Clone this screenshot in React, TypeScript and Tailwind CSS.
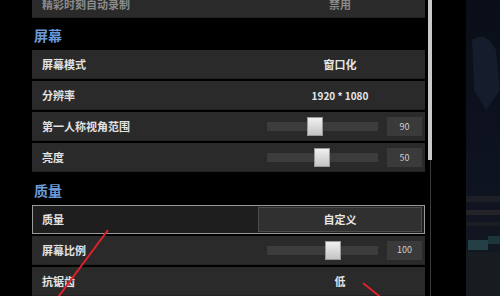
import React from "react";

const font = { fontFamily: '"Noto Sans CJK SC", "Noto Sans", sans-serif' };

const Row = ({ label, children, dim, h = "h-[29px]" }: { label: string; children?: React.ReactNode; dim?: boolean; h?: string }) => (
    <div className={`flex ${h} items-center bg-[#2a2a2a] border-b border-[#222]`}>
        <div className={`w-[226px] pl-[10px] text-[11px] font-bold ${dim ? "text-[#8a8a8a]" : "text-[#e2e2e2]"}`}>{label}</div>
        <div className="flex flex-1 items-center justify-center pr-[3px]">{children}</div>
    </div>
);

const Value = ({ text, dim, small }: { text: string; dim?: boolean; small?: boolean }) => (
    <span className={`${small ? "text-[10px]" : "text-[11px]"} font-bold ${dim ? "text-[#8a8a8a]" : "text-[#e6e6e6]"}`}>{text}</span>
);

const Slider = ({ pos, value }: { pos: number; value: string }) => (
    <div className="flex w-full items-center">
        <div className="relative ml-[9px] h-[9px] w-[111px] bg-[#3c3c3c]">
            <div
                className="absolute top-[-5px] h-[19px] w-[16px] bg-gradient-to-b from-[#f0f0f0] to-[#c4c4c4] border border-[#999]"
                style={{ left: pos }}
            />
        </div>
        <div className="ml-[9px] flex h-[19px] w-[35px] items-center justify-center bg-[#3a3a3a] text-[9px] text-[#cfcfcf]">
            {value}
        </div>
    </div>
);

const Header = ({ text }: { text: string }) => (
    <div className="flex h-[34px] items-center pl-[2px] pt-[3px] text-[14px] font-bold text-[#6c9ad6]">{text}</div>
);

export default function App() {
    return (
        <div className="relative flex h-[296px] w-[500px] overflow-hidden bg-black" style={font}>
            <div className="w-[32px]" />
            <div className="-mt-[8px] flex w-[393px] flex-col">
                <Row label="精彩时刻自动录制" dim h="h-[27px]">
                    <Value text="禁用" dim />
                </Row>
                <Header text="屏幕" />
                <div className="flex flex-col gap-[2px]">
                    <Row label="屏幕模式">
                        <Value text="窗口化" />
                    </Row>
                    <Row label="分辨率">
                        <Value text="1920 * 1080" small />
                    </Row>
                    <Row label="第一人称视角范围">
                        <Slider pos={40} value="90" />
                    </Row>
                    <Row label="亮度">
                        <Slider pos={47} value="50" />
                    </Row>
                </div>
                <Header text="质量" />
                <div className="flex flex-col gap-[2px]">
                    <div className="flex h-[29px] items-center border border-[#9a9a9a] bg-[#1e1e1e]">
                        <div className="w-[225px] pl-[9px] text-[11px] font-bold text-[#e2e2e2]">质量</div>
                        <div className="mr-[2px] flex h-[25px] flex-1 items-center justify-center border border-[#4a4a4a] bg-[#303030]">
                            <Value text="自定义" />
                        </div>
                    </div>
                    <Row label="屏幕比例">
                        <Slider pos={58} value="100" />
                    </Row>
                    <Row label="抗锯齿">
                        <Value text="低" />
                    </Row>
                </div>
            </div>
            <div className="ml-[3px] flex w-[4px] flex-col items-center">
                <div className="h-[160px] w-[4px] bg-[#cacaca]" />
                <div className="w-px flex-1 bg-[#3a3a3a]" />
            </div>
            <div className="w-[34px]" />
            <div className="flex-1">
                <svg width="34" height="296" viewBox="0 0 34 296">
                    <defs>
                        <linearGradient id="bg" x1="0" y1="0" x2="0" y2="1">
                            <stop offset="0" stopColor="#0a0e18" />
                            <stop offset="0.6" stopColor="#0e1320" />
                            <stop offset="1" stopColor="#141a22" />
                        </linearGradient>
                    </defs>
                    <rect width="34" height="296" fill="url(#bg)" />
                    <path d="M6 40 Q20 30 30 50 L34 90 L20 110 L8 90 Z" fill="#151c2c" />
                    <rect x="0" y="196" width="34" height="6" fill="#1c1f25" />
                    <rect x="0" y="210" width="34" height="5" fill="#222428" />
                    <rect x="0" y="222" width="34" height="4" fill="#1a1d21" />
                    <rect x="2" y="240" width="20" height="10" fill="#244046" />
                    <rect x="22" y="236" width="12" height="8" fill="#1c343a" />
                    <rect x="0" y="252" width="34" height="44" fill="#161c20" />
                </svg>
            </div>
            <svg className="pointer-events-none absolute left-0 top-0" width="500" height="296">
                <line x1="108" y1="230" x2="56" y2="300" stroke="#e0202a" strokeWidth="2" />
                <line x1="363" y1="283" x2="384" y2="300" stroke="#e0202a" strokeWidth="2" />
            </svg>
        </div>
    );
}
